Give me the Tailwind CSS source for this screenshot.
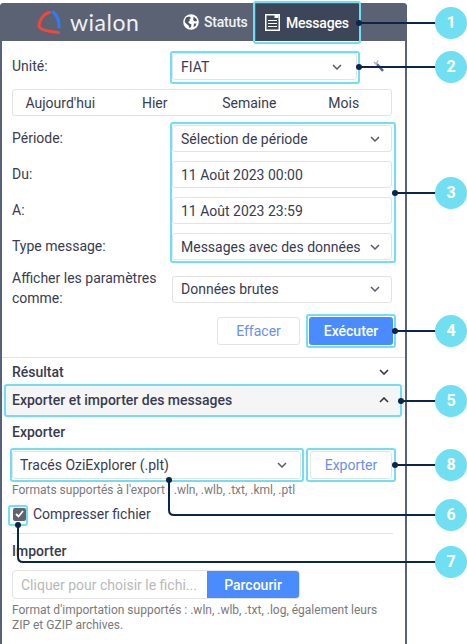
<!DOCTYPE html>
<html lang="fr">
<head>
  <meta charset="UTF-8">
  <title>Messages</title>
  <script src="https://cdn.jsdelivr.net/npm/@tailwindcss/browser@4"></script>
</head>
<body class="bg-white">
  <div class="relative w-[467px] h-[644px] overflow-hidden pt-[3px] font-['Roboto',sans-serif] text-sm text-[#383c50]">
    <!-- Panel -->
    <div class="w-[407px] h-[641px] border-x-2 border-[#58627a] rounded-t-[4px] bg-white">
      <!-- Header -->
      <header class="flex h-[38px] items-center bg-[#5a6274] -mx-[2px] rounded-t-[4px] pl-[37px]">
        <svg class="w-[24px] h-[26px]" viewBox="0 0 24 26" fill="none">
          <path d="M12.5 3.5C7 4 2.5 11 2 16.5C2 21 12 22.500 21.500 23.500" stroke="#f0483c" stroke-width="3" stroke-linecap="round"/>
          <path d="M16 3C19.500 5.500 22.500 12 22 18" stroke="#2f7cf6" stroke-width="3" stroke-linecap="round"/>
        </svg>
        <span class="ml-[9px] w-[73px] text-[23px] leading-none tracking-[0.5px] text-[#eef0f3] font-['Lato',sans-serif]">wialon</span>
        <div class="ml-[40px] flex w-[73px] items-center">
          <svg class="w-[16px] h-[16px]" viewBox="0 0 16 16">
            <circle cx="8" cy="8" r="7.8" fill="#fff"/>
            <path d="M3 3.500L6.500 2.500L8 4L6.500 5.500L6.800 7L5 8L6.500 9.500L8.500 10.500L8 13L6.500 14L5.500 11.500L3 9.500L1.700 7.500ZM10.500 2.500L13.500 5L14 7L12 7.500L10 6L10.500 4.500ZM11 9.500L13.500 9.500L12.500 12L10.500 13Z" fill="#4d5568"/>
          </svg>
          <span class="ml-[5px] font-medium tracking-[-0.2px] text-[#f2f3f5]">Statuts</span>
        </div>
        <div class="flex items-center h-[37px] mt-[1px] w-[103px] bg-[#3d4659] pl-[9px]">
          <svg class="w-[15px] h-[17px]" viewBox="0 0 15 17" fill="none">
            <rect x="0.750" y="0.750" width="13.500" height="15.500" stroke="#fff" stroke-width="1.500"/>
            <rect x="9.500" y="1" width="4" height="3" fill="#fff"/>
            <path d="M3 6.500H12M3 9.500H12M3 12.500H12" stroke="#fff" stroke-width="1.200"/>
          </svg>
          <span class="ml-[6px] font-medium tracking-[-0.2px] text-white">Messages</span>
        </div>
      </header>

      <main class="px-[10px] pt-[12px]">
        <!-- Unit -->
        <div class="flex items-start">
          <label class="w-[160px] pt-[3px] leading-5">Unité:</label>
          <div class="flex w-[185px] h-[27px] items-center justify-between rounded-[3px] border border-[#e3e3e3] pl-2 pr-[14px]">
            <span>FIAT</span>
            <svg class="w-[10px] h-[6px]" viewBox="0 0 10 6" fill="none"><path d="M1 1L5 5L9 1" stroke="#555c6c" stroke-width="1.500"/></svg>
          </div>
          <svg class="ml-[15px] mt-[7px] w-[12px] h-[12px]" viewBox="0 0 12 12" fill="none"><path d="M5 4L11 11" stroke="#4c6a92" stroke-width="2.500"/><path d="M2 2L5 5M6 0.500L4 4" stroke="#a9b4c2" stroke-width="1.500"/></svg>
        </div>

        <!-- Quick dates -->
        <div class="mt-[9px] grid grid-cols-4 h-[27px] w-[380px] items-center rounded-[3px] border border-[#e3e3e3] text-center">
          <span>Aujourd'hui</span><span>Hier</span><span>Semaine</span><span>Mois</span>
        </div>

        <!-- Period -->
        <div class="mt-[9px] flex items-start">
          <label class="w-[160px] pt-[3px] leading-5">Période:</label>
          <div class="flex w-[220px] h-[27px] items-center justify-between rounded-[3px] border border-[#e3e3e3] pl-2 pr-[11px]">
            <span>Sélection de période</span>
            <svg class="w-[10px] h-[6px]" viewBox="0 0 10 6" fill="none"><path d="M1 1L5 5L9 1" stroke="#555c6c" stroke-width="1.500"/></svg>
          </div>
        </div>
        <div class="mt-[9px] flex items-start">
          <label class="w-[160px] pt-[3px] leading-5">Du:</label>
          <div class="flex w-[220px] h-[27px] items-center rounded-[3px] border border-[#e3e3e3] pl-[8px]">11 Août 2023 00:00</div>
        </div>
        <div class="mt-[9px] flex items-start">
          <label class="w-[160px] pt-[3px] leading-5">A:</label>
          <div class="flex w-[220px] h-[27px] items-center rounded-[3px] border border-[#e3e3e3] pl-[8px]">11 Août 2023 23:59</div>
        </div>
        <div class="mt-[9px] flex items-start">
          <label class="w-[160px] pt-[3px] leading-5">Type message:</label>
          <div class="flex w-[220px] h-[27px] items-center justify-between rounded-[3px] border border-[#e3e3e3] pl-2 pr-[11px]">
            <span>Messages avec des données</span>
            <svg class="w-[10px] h-[6px]" viewBox="0 0 10 6" fill="none"><path d="M1 1L5 5L9 1" stroke="#555c6c" stroke-width="1.500"/></svg>
          </div>
        </div>
        <div class="mt-[9px] flex items-center h-[40px]">
          <label class="w-[160px] -mt-[2px] leading-5">Afficher les paramètres comme:</label>
          <div class="flex w-[220px] h-[27px] items-center justify-between rounded-[3px] border border-[#e3e3e3] pl-2 pr-[11px]">
            <span>Données brutes</span>
            <svg class="w-[10px] h-[6px]" viewBox="0 0 10 6" fill="none"><path d="M1 1L5 5L9 1" stroke="#555c6c" stroke-width="1.500"/></svg>
          </div>
        </div>

        <!-- Actions -->
        <div class="mt-[8px] flex justify-end gap-[9px] w-[381px]">
          <button class="w-[83px] h-[28px] rounded-[3px] border border-[#e3e3e3] text-[#6a8ff0]">Effacer</button>
          <button class="w-[84px] h-[28px] rounded-[3px] bg-[#4a8cff] font-medium text-white">Exécuter</button>
        </div>
      </main>

      <!-- Result -->
      <div class="mt-[12px] flex h-[28px] items-center justify-between border-t border-[#e3e3e3] pl-[10px] pr-[16px] font-medium">
        <span>Résultat</span>
        <svg class="w-[10px] h-[6px]" viewBox="0 0 10 6" fill="none"><path d="M1 1L5 5L9 1" stroke="#30344a" stroke-width="1.600"/></svg>
      </div>

      <!-- Export / import -->
      <div class="flex h-[30px] items-center justify-between bg-[#f5f5f5] pl-[10px] pr-[16px] font-medium">
        <span>Exporter et importer des messages</span>
        <svg class="w-[10px] h-[6px]" viewBox="0 0 10 6" fill="none"><path d="M1 5L5 1L9 5" stroke="#30344a" stroke-width="1.600"/></svg>
      </div>
      <section class="px-[10px]">
        <h3 class="mt-[7px] font-medium leading-5">Exporter</h3>
        <div class="mt-[9px] flex items-start">
          <div class="flex w-[289px] h-[28px] items-center justify-between rounded-[3px] border border-[#e3e3e3] pl-[7px] pr-[13px]">
            <span>Tracés OziExplorer (.plt)</span>
            <svg class="w-[10px] h-[6px]" viewBox="0 0 10 6" fill="none"><path d="M1 1L5 5L9 1" stroke="#555c6c" stroke-width="1.500"/></svg>
          </div>
          <button class="ml-[9px] w-[82px] h-[28px] rounded-[3px] border border-[#e3e3e3] text-[#6a8ff0]">Exporter</button>
        </div>
        <p class="mt-[3px] text-xs leading-4 text-[#7a7a7a]">Formats supportés à l'export : .wln, .wlb, .txt, .kml, .ptl</p>
        <div class="mt-[7px] flex items-center h-[18px]">
          <span class="ml-[1px] flex h-[13px] w-[13px] items-center justify-center rounded-[2px] bg-[#5f6470]">
            <svg class="w-[9px] h-[8px]" viewBox="0 0 9 8" fill="none"><path d="M1 4L3.500 6.500L8 1" stroke="#fff" stroke-width="1.800"/></svg>
          </span>
          <span class="ml-[7px]">Compresser fichier</span>
        </div>
        <div class="mt-[10px] w-[381px] border-t border-[#e3e3e3]"></div>
        <h3 class="mt-[7px] font-medium leading-5">Importer</h3>
        <div class="mt-[9px] flex w-[288px] h-[29px] overflow-hidden rounded-[4px] border border-[#e3e3e3]">
          <span class="flex w-[194px] items-center pl-2 text-[#b9b9b9]">Cliquer pour choisir le fichi...</span>
          <span class="flex flex-1 items-center justify-center bg-[#4a8cff] font-medium text-white">Parcourir</span>
        </div>
        <p class="mt-[4px] w-[380px] text-xs leading-[15px] text-[#7a7a7a]">Format d'importation supportés : .wln, .wlb, .txt, .log, également leurs ZIP et GZIP archives.</p>
      </section>
    </div>

    <!-- Annotation highlights -->
    <div class="absolute left-[253px] top-[1px] w-[108px] h-[43px] rounded-[3px] border-2 border-[#6fdff1]"></div>
    <div class="absolute left-[170px] top-[51px] w-[190px] h-[33px] rounded-[3px] border-2 border-[#6fdff1]"></div>
    <div class="absolute left-[170px] top-[122px] w-[226px] h-[141px] rounded-[3px] border-2 border-[#6fdff1]"></div>
    <div class="absolute left-[306px] top-[314px] w-[90px] h-[34px] rounded-[3px] border-2 border-[#6fdff1]"></div>
    <div class="absolute left-[4px] top-[384px] w-[398px] h-[33px] rounded-[3px] border-2 border-[#6fdff1]"></div>
    <div class="absolute left-[10px] top-[448px] w-[294px] h-[34px] rounded-[3px] border-2 border-[#6fdff1]"></div>
    <div class="absolute left-[306px] top-[448px] w-[90px] h-[34px] rounded-[3px] border-2 border-[#6fdff1]"></div>
    <div class="absolute left-[8px] top-[505px] w-[20px] h-[21px] rounded-[3px] border-2 border-[#6fdff1]"></div>

    <!-- Callout lines -->
    <svg class="absolute left-0 top-0 w-[467px] h-[644px]" viewBox="0 0 467 644" fill="none" stroke="#0c2549" stroke-width="2">
      <path d="M359 23H436M359 67H436M395 193H436M395 331H436M401 401H436M395 465H436"/>
      <path d="M169 480V510Q169 515 174 515H436"/>
      <path d="M18 525V557Q18 562 23 562H436"/>
      <g fill="#0c2549" stroke="none">
        <circle cx="359" cy="23" r="3"/>
        <circle cx="359" cy="67" r="3"/>
        <circle cx="395" cy="193" r="3"/>
        <circle cx="395" cy="331" r="3"/>
        <circle cx="401" cy="401" r="3"/>
        <circle cx="395" cy="465" r="3"/>
        <circle cx="169" cy="480" r="3"/>
        <circle cx="18" cy="525" r="3"/>
      </g>
    </svg>

    <!-- Callout badges -->
    <div class="absolute left-[435px] top-[7px] flex h-8 w-8 items-center justify-center rounded-full bg-[#6fdff1] text-base font-bold text-white">1</div>
    <div class="absolute left-[435px] top-[51px] flex h-8 w-8 items-center justify-center rounded-full bg-[#6fdff1] text-base font-bold text-white">2</div>
    <div class="absolute left-[435px] top-[177px] flex h-8 w-8 items-center justify-center rounded-full bg-[#6fdff1] text-base font-bold text-white">3</div>
    <div class="absolute left-[435px] top-[315px] flex h-8 w-8 items-center justify-center rounded-full bg-[#6fdff1] text-base font-bold text-white">4</div>
    <div class="absolute left-[435px] top-[385px] flex h-8 w-8 items-center justify-center rounded-full bg-[#6fdff1] text-base font-bold text-white">5</div>
    <div class="absolute left-[435px] top-[449px] flex h-8 w-8 items-center justify-center rounded-full bg-[#6fdff1] text-base font-bold text-white">8</div>
    <div class="absolute left-[435px] top-[499px] flex h-8 w-8 items-center justify-center rounded-full bg-[#6fdff1] text-base font-bold text-white">6</div>
    <div class="absolute left-[435px] top-[546px] flex h-8 w-8 items-center justify-center rounded-full bg-[#6fdff1] text-base font-bold text-white">7</div>
  </div>
</body>
</html>
